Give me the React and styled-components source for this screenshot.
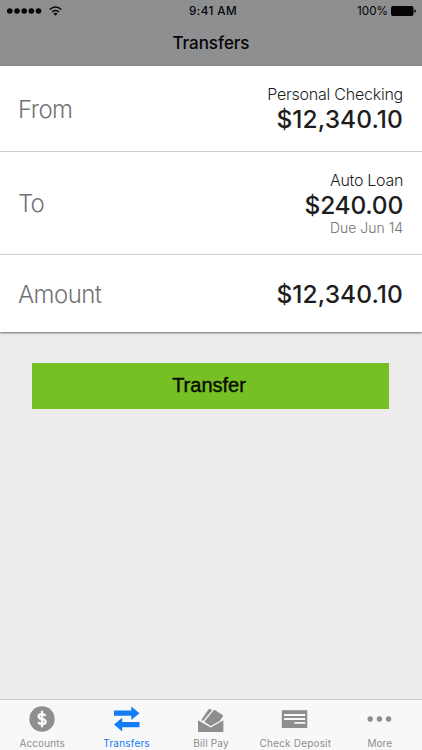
import React from "react";
import styled, { createGlobalStyle } from "styled-components";

const GlobalStyle = createGlobalStyle`
  *, *::before, *::after { box-sizing: border-box; }
  body { margin: 0; background: #ececec; }
`;

const Screen = styled.div`
  display: flex;
  flex-direction: column;
  width: 422px;
  height: 750px;
  overflow: hidden;
  background: #ececec;
  color: #1d1d1e;
  font-family: Inter, "Liberation Sans", sans-serif;
`;

const Header = styled.header`
  height: 66px;
  flex: none;
  background: #8e8f91;
  color: #050505;
`;

const StatusBar = styled.div`
  display: grid;
  grid-template-columns: 1fr auto 1fr;
  align-items: center;
  height: 22px;
  padding: 0 6px 0 7px;
`;

const StatusGroup = styled.div`
  display: flex;
  align-items: center;
  justify-content: ${(p) => (p.$end ? "flex-end" : "flex-start")};
  gap: ${(p) => (p.$end ? "3px" : "7px")};
`;

const StatusText = styled.span`
  font-size: 11.7px;
  line-height: 22px;
  font-weight: ${(p) => p.$weight};
  letter-spacing: ${(p) => p.$tracking};
  padding-left: ${(p) => p.$inset || 0};
`;

const Title = styled.h1`
  margin: 0;
  padding-top: 10px;
  text-align: center;
  font-size: 17px;
  line-height: 22px;
  font-weight: 550;
  letter-spacing: -0.05px;
`;

const Card = styled.section`
  flex: none;
  background: #fff;
  box-shadow: 0 1px 2px rgba(0, 0, 0, 0.55);
`;

const Row = styled.div`
  display: flex;
  align-items: center;
  justify-content: space-between;
  height: ${(p) => p.$height};
  padding: 0 19px 0 18px;
  & + & { border-top: 1px solid #cfcfcf; }
`;

const Label = styled.span`
  padding-top: 2px;
  font-size: 24px;
  line-height: 30px;
  font-weight: 300;
  letter-spacing: ${(p) => p.$tracking};
  color: #737376;
`;

const Value = styled.div`
  display: flex;
  flex-direction: column;
  align-items: flex-end;
`;

const AccountName = styled.span`
  font-size: 16px;
  line-height: 20px;
  font-weight: 300;
  letter-spacing: ${(p) => p.$tracking};
`;

const Amount = styled.span`
  font-size: 24.5px;
  line-height: 30px;
  font-weight: 460;
  letter-spacing: ${(p) => p.$tracking};
`;

const DueDate = styled.span`
  margin-top: -1px;
  font-size: 14px;
  line-height: 18px;
  font-weight: 300;
  color: #737376;
`;

const TransferButton = styled.button`
  flex: none;
  height: 46px;
  margin: 31px 33px 0 32px;
  padding: 0 3px 1px 0;
  border: 0;
  background: #76c023;
  color: #080b03;
  font-family: "Liberation Sans", sans-serif;
  font-size: 20px;
  -webkit-text-stroke: 0.4px currentColor;
`;

const TabBar = styled.nav`
  display: grid;
  grid-template-columns: repeat(5, 1fr);
  height: 51px;
  margin-top: auto;
  border-top: 1px solid #c9c9c9;
  background: #f8f8f8;
`;

const Tab = styled.a`
  display: flex;
  flex-direction: column;
  align-items: center;
  padding-top: 5px;
  color: ${(p) => (p.$active ? "#117cf6" : "#8e8e8e")};
  svg { display: block; flex: none; }
`;

const TabLabel = styled.span`
  margin-top: 3px;
  font-size: 10px;
  line-height: 14px;
  white-space: nowrap;
  letter-spacing: ${(p) => p.$tracking};
`;

const SignalDots = () => (
  <svg width="35" height="10" viewBox="0 0 35 10" fill="currentColor">
    {[2.75, 10, 17.2, 24.3, 31.5].map((x) => <circle key={x} cx={x} cy="5" r="2.8" />)}
  </svg>
);

const Wifi = () => (
  <svg width="13" height="10" viewBox="0 0 13 10" fill="none" stroke="currentColor" strokeWidth="1.6">
    <path d="M.7 3.5Q6.5-1.5 12.3 3.5M3 6Q6.5 3 10 6" />
    <path d="M4.5 7.5Q6.5 5.9 8.5 7.5L6.5 9.7Z" fill="currentColor" stroke="none" />
  </svg>
);

const Battery = () => (
  <svg width="25" height="10" viewBox="0 0 25 10" fill="currentColor">
    <rect width="22.5" height="10" rx="2" />
    <path d="M23.3 3.2Q25 3.6 25 5T23.3 6.8Z" />
  </svg>
);

const AccountsIcon = () => (
  <svg width="28" height="28" viewBox="0 0 28 28">
    <circle cx="14" cy="14" r="12.7" fill="currentColor" />
    <path d="M17.5 10.9Q16.5 9.2 14 9.2Q10.6 9.2 10.6 11.4Q10.6 13.3 14 13.9Q17.6 14.6 17.6 16.7Q17.6 19 14 19Q11.2 19 10.1 17.1M14 5.8V22.2" fill="none" stroke="#f8f8f8" strokeWidth="2.4" />
  </svg>
);

const TransfersIcon = () => (
  <svg width="28" height="28" viewBox="0 0 28 28" fill="currentColor">
    <path d="M1 5.5H18.3V1.5L26.5 8.3L18.3 14.9V10.8H1Z" />
    <path d="M26.5 17H9.2V12.7L1 19.6L9.2 26.4V22.2H26.5Z" />
  </svg>
);

const BillPayIcon = () => (
  <svg width="28" height="28" viewBox="0 0 28 28" fill="currentColor">
    <path d="M1 15.2L13.7 22.6L26.4 15.2V27H1Z" />
    <path d="M4.3 15.1L11.6 4.3Q12.1 3.7 12.8 3.9L15.2 5.1L6 16.1Z" />
    <path d="M7.3 16.8L16.6 5.4Q17.3 4.7 18.1 5.2L25.6 9.9Q26.4 10.6 25.8 11.5L22.7 16L13.7 21.1Z" />
  </svg>
);

const CheckIcon = () => (
  <svg width="28" height="28" viewBox="0 0 28 28">
    <path d="M.8 5.2H26.3V23H.8Z" fill="currentColor" />
    <path d="M3.1 10H24.2M3.1 14H24.2M13.5 17.8H24.2" stroke="#f8f8f8" strokeWidth="1.8" />
  </svg>
);

const MoreIcon = () => (
  <svg width="28" height="28" viewBox="0 0 28 28" fill="currentColor">
    <circle cx="4.2" cy="14" r="2.7" />
    <circle cx="13.4" cy="14" r="2.7" />
    <circle cx="22.6" cy="14" r="2.7" />
  </svg>
);

const tabs = [
  { label: "Accounts", Icon: AccountsIcon, tracking: "0.1px" },
  { label: "Transfers", Icon: TransfersIcon, tracking: "0.2px", active: true },
  { label: "Bill Pay", Icon: BillPayIcon, tracking: "0.2px" },
  { label: "Check Deposit", Icon: CheckIcon, tracking: "0.18px" },
  { label: "More", Icon: MoreIcon, tracking: "0.05px" },
];

export default function App() {
  return (
    <>
      <GlobalStyle />
      <Screen>
        <Header>
          <StatusBar>
            <StatusGroup><SignalDots /><Wifi /></StatusGroup>
            <StatusText $weight={500} $tracking="0.42px" $inset="3px">9:41 AM</StatusText>
            <StatusGroup $end>
              <StatusText $weight={400} $tracking="0">100%</StatusText>
              <Battery />
            </StatusGroup>
          </StatusBar>
          <Title>Transfers</Title>
        </Header>
        <Card>
          <Row $height="85px">
            <Label $tracking="-0.55px">From</Label>
            <Value>
              <AccountName $tracking="-0.23px">Personal Checking</AccountName>
              <Amount $tracking="0.08px">$12,340.10</Amount>
            </Value>
          </Row>
          <Row $height="103px">
            <Label $tracking="-0.9px">To</Label>
            <Value>
              <AccountName $tracking="-0.3px">Auto Loan</AccountName>
              <Amount $tracking="-0.25px">$240.00</Amount>
              <DueDate>Due Jun 14</DueDate>
            </Value>
          </Row>
          <Row $height="78px">
            <Label $tracking="-0.55px">Amount</Label>
            <Amount $tracking="0.08px">$12,340.10</Amount>
          </Row>
        </Card>
        <TransferButton type="button">Transfer</TransferButton>
        <TabBar>
          {tabs.map(({ label, Icon, tracking, active }) => (
            <Tab key={label} $active={active}>
              <Icon />
              <TabLabel $tracking={tracking}>{label}</TabLabel>
            </Tab>
          ))}
        </TabBar>
      </Screen>
    </>
  );
}
